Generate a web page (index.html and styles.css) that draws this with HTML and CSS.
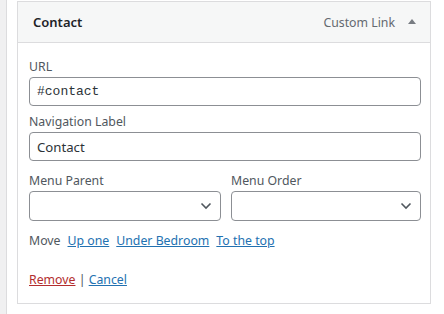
FILE: index.html
```html
<!DOCTYPE html>
<html lang="en">
<head>
<meta charset="UTF-8" />
<title>Menu item – Contact</title>
<link rel="stylesheet" href="styles.css">
</head>
<body>
<div class="page">
  <div class="gutter"></div>
  <main class="menu-area">
    <div class="menu-item">
      <div class="item-bar">
        <span class="item-title">Contact</span>
        <span class="item-type">Custom Link</span>
        <span class="item-toggle"></span>
      </div>
      <div class="item-settings">
        <div class="field">
          <label class="field-label">URL</label>
          <input type="text" class="text-input code" value="#contact">
        </div>
        <div class="field">
          <label class="field-label">Navigation Label</label>
          <input type="text" class="text-input" value="Contact">
        </div>
        <div class="field-row">
          <div class="field parent">
            <label class="field-label">Menu Parent</label>
            <div class="select-box">
              <svg class="chevron" width="12" height="8" viewBox="0 0 12 8"><path d="M1.5 1.5 L6 6 L10.5 1.5" fill="none" stroke="#50575e" stroke-width="1.6"/></svg>
            </div>
          </div>
          <div class="field order">
            <label class="field-label">Menu Order</label>
            <div class="select-box">
              <svg class="chevron" width="12" height="8" viewBox="0 0 12 8"><path d="M1.5 1.5 L6 6 L10.5 1.5" fill="none" stroke="#50575e" stroke-width="1.6"/></svg>
            </div>
          </div>
        </div>
        <div class="move-row">
          <span>Move</span>
          <a href="#">Up one</a>
          <a href="#">Under Bedroom</a>
          <a href="#">To the top</a>
        </div>
        <div class="actions">
          <a href="#" class="remove">Remove</a> <span class="sep">|</span> <a href="#">Cancel</a>
        </div>
      </div>
    </div>
  </main>
</div>
</body>
</html>
```

FILE: styles.css
```css
* { box-sizing: border-box; margin: 0; padding: 0; }
html, body { height: 100%; }
body {
  background: #fff; color: #3c434a;
  font-family: 'Noto Sans', 'Open Sans', sans-serif; font-size: 12.3px;
}
.page { display: flex; height: 100%; }
.gutter {
  width: 7px;
  background: #f0f0f1;
  border-right: 1px solid #dcdcde;
}
.menu-area { flex: 1; padding: 1px 12px 0 10px; }

.menu-item {
  width: 414px;
  border: 1px solid #dcdcde;
  background: #fff;
}
.item-bar {
  display: flex; align-items: center;
  height: 41px;
  padding: 0 14px 0 15px;
  background: #f6f7f7;
  border-bottom: 1px solid #dcdcde;
}
.item-title { font-weight: 600; font-size: 13px; color: #1d2327; flex: 1; }
.item-type { color: #646970; font-size: 12.3px; margin-right: 13px; }
.item-toggle {
  width: 0; height: 0;
  border-left: 4px solid transparent;
  border-right: 4px solid transparent;
  border-bottom: 5px solid #787c82;
  margin-top: -2px;
}

.item-settings { padding: 15px 9px 0 11px; height: 260px; }
.field { margin-bottom: 7px; }
.field-label { display: block; line-height: 18px; margin-bottom: 1px; color: #50575e; }
.text-input {
  display: block; width: 100%; height: 29px;
  border: 1px solid #8c8f94; border-radius: 4px;
  padding: 0 7px;
  font-family: inherit; font-size: 13.2px; color: #2c3338;
  background: #fff;
}
.text-input.code { font-family: 'Liberation Mono', monospace; font-size: 13px; }

.field-row { display: flex; gap: 10px; margin-top: 11px; }
.field-row .parent { flex: 0 0 192px; }
.field-row .order { flex: 1; }
.select-box {
  height: 30px;
  border: 1px solid #8c8f94; border-radius: 4px;
  display: flex; align-items: center; justify-content: flex-end;
  padding-right: 8px;
}

.move-row { display: flex; gap: 7px; margin-top: 4px; line-height: 18px; color: #50575e; }
a { color: #2271b1; text-decoration: underline; }
.actions { margin-top: 21px; line-height: 18px; color: #50575e; }
.actions .remove { color: #b32d2e; }
```
